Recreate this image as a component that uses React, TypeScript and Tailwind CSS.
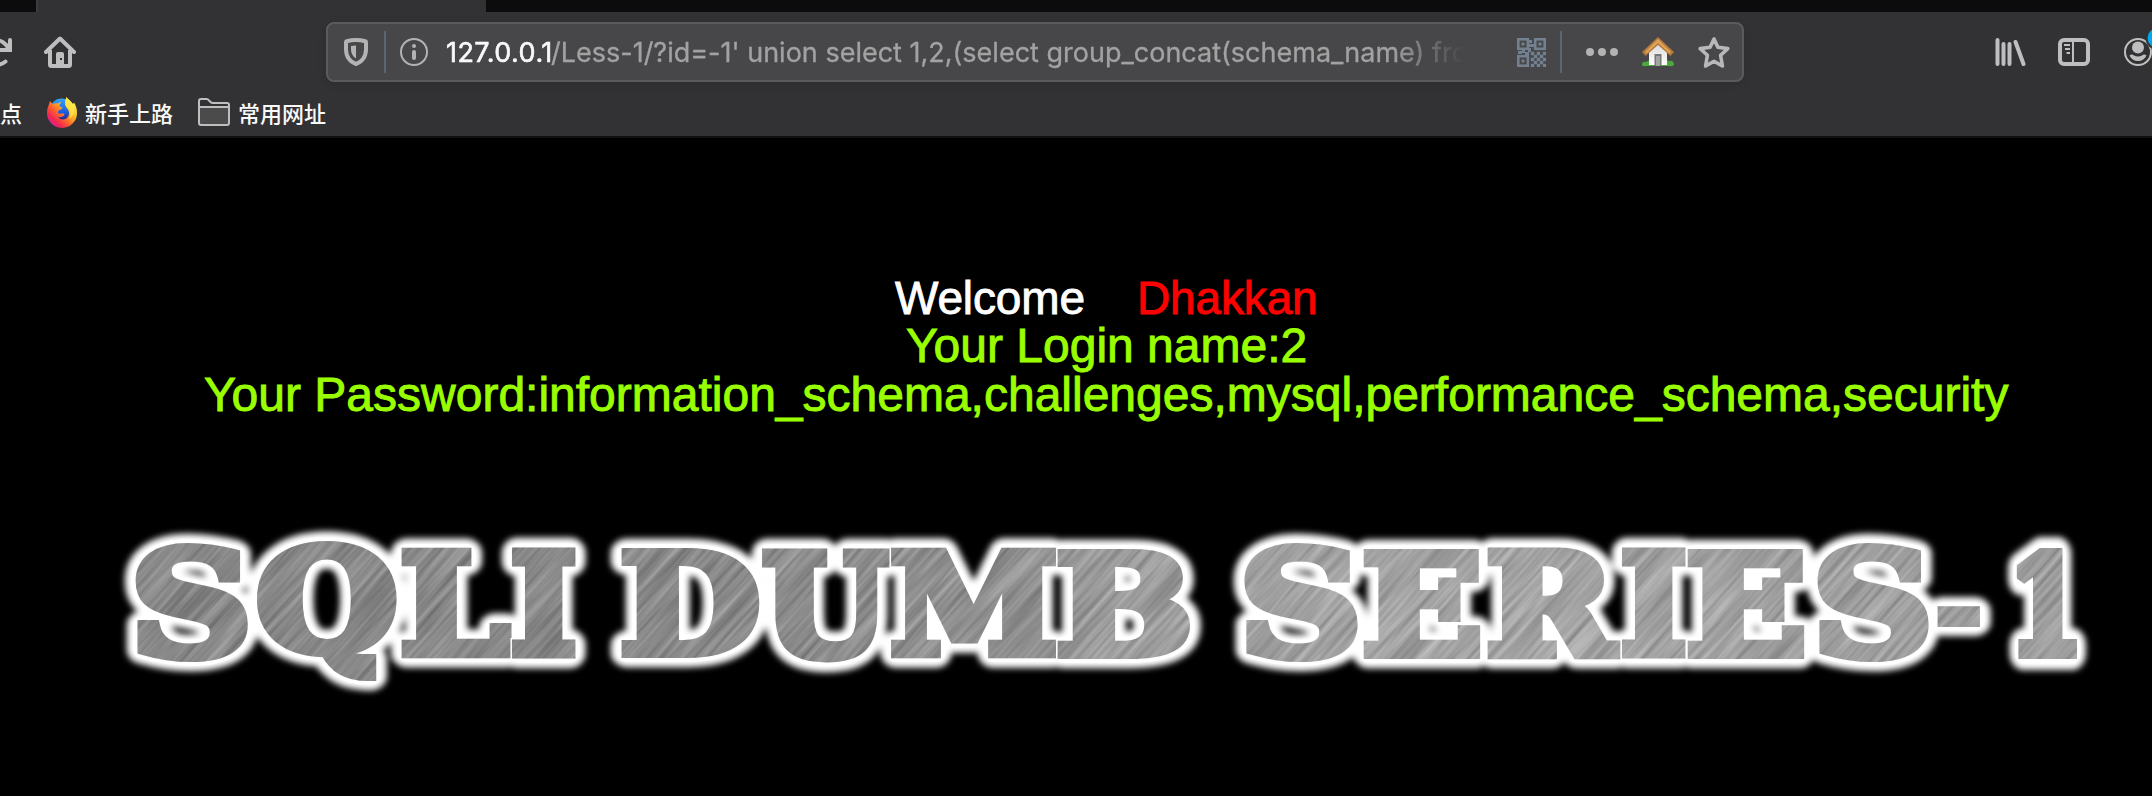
import { useMemo } from "react";

type Glyph = { ch: string; x0: number; x1: number; y0: number; y1: number };

/* Ink box of every banner letter, in banner coordinates. */
const GLYPHS: Glyph[] = [
  { ch: "S", x0: 135, x1: 248, y0: 42, y1: 162 },
  { ch: "Q", x0: 257, x1: 397, y0: 41, y1: 182 },
  { ch: "L", x0: 402, x1: 512, y0: 48, y1: 158 },
  { ch: "I", x0: 512, x1: 576, y0: 48, y1: 158 },
  { ch: "D", x0: 622, x1: 759, y0: 48, y1: 158 },
  { ch: "U", x0: 762, x1: 891, y0: 48, y1: 162 },
  { ch: "M", x0: 891, x1: 1057, y0: 48, y1: 158 },
  { ch: "B", x0: 1058, x1: 1190, y0: 48, y1: 159 },
  { ch: "S", x0: 1244, x1: 1358, y0: 42, y1: 162 },
  { ch: "E", x0: 1364, x1: 1480, y0: 48, y1: 159 },
  { ch: "R", x0: 1488, x1: 1621, y0: 48, y1: 159 },
  { ch: "I", x0: 1622, x1: 1686, y0: 48, y1: 158 },
  { ch: "E", x0: 1688, x1: 1804, y0: 48, y1: 159 },
  { ch: "S", x0: 1817, x1: 1929, y0: 42, y1: 162 },
  { ch: "-", x0: 1938, x1: 1980, y0: 106, y1: 128 },
  { ch: "1", x0: 2016, x1: 2078, y0: 48, y1: 158 },
];

const BOLDEN = 11;

function useFittedGlyphs() {
  return useMemo(() => {
    const ctx = document.createElement("canvas").getContext("2d")!;
    ctx.font = 'bold 150px "DejaVu Serif"';
    return GLYPHS.map((g) => {
      const m = ctx.measureText(g.ch);
      const left = -m.actualBoundingBoxLeft;
      const right = m.actualBoundingBoxRight;
      const top = -m.actualBoundingBoxAscent;
      const bottom = m.actualBoundingBoxDescent;
      const pad = BOLDEN / 2;
      const sx = (g.x1 - g.x0 - BOLDEN) / (right - left);
      const sy = (g.y1 - g.y0 - BOLDEN) / (bottom - top);
      const tx = g.x0 + pad - left * sx;
      const ty = g.y0 + pad - top * sy;
      return { ch: g.ch, transform: `matrix(${sx} 0 0 ${sy} ${tx} ${ty})` };
    });
  }, []);
}

function Banner() {
  const glyphs = useFittedGlyphs();
  const letter = (
    g: { ch: string; transform: string },
    key: string,
    color: string,
    stroke: number,
    join: "round" | "miter" = "round",
  ) => (
    <text
      key={key}
      transform={g.transform}
      fontFamily="DejaVu Serif, serif"
      fontWeight="bold"
      fontSize="150"
      fill={color}
      stroke={color}
      strokeWidth={stroke}
      strokeLinejoin={join}
      strokeMiterlimit="1.6"
      vectorEffect="non-scaling-stroke"
    >
      {g.ch}
    </text>
  );
  return (
    <svg width="2152" height="230" viewBox="0 0 2152 230" className="block shrink-0" aria-label="SQLI DUMB SERIES-1">
      <defs>
        <filter id="glow" x="0" y="0" width="2152" height="230" filterUnits="userSpaceOnUse">
          <feGaussianBlur stdDeviation="3" />
        </filter>
        <filter
          id="brush"
          x="-400"
          y="-1400"
          width="3200"
          height="3400"
          filterUnits="userSpaceOnUse"
          colorInterpolationFilters="sRGB"
        >
          <feTurbulence type="fractalNoise" baseFrequency="0.009 0.2" numOctaves="3" seed="4" />
          <feColorMatrix values="1 0 0 0 0.03  1 0 0 0 0.03  1 0 0 0 0.03  0 0 0 0 1" />
        </filter>
        <linearGradient id="steel" x1="0" y1="0" x2="2152" y2="0" gradientUnits="userSpaceOnUse">
          <stop offset="0" stopColor="#888888" />
          <stop offset="0.33" stopColor="#8a8a8a" />
          <stop offset="0.46" stopColor="#949494" />
          <stop offset="0.53" stopColor="#a8a8a8" />
          <stop offset="0.7" stopColor="#b0b0b0" />
          <stop offset="1" stopColor="#a2a2a2" />
        </linearGradient>
        <mask id="letters" x="0" y="0" width="2152" height="230" maskUnits="userSpaceOnUse">
          {glyphs.map((g, i) => (
            <g key={i}>
              {letter(g, "rim", "#000", BOLDEN + 3, "miter")}
              {letter(g, "face", "#fff", BOLDEN, "miter")}
            </g>
          ))}
        </mask>
      </defs>
      <g filter="url(#glow)">{glyphs.map((g, i) => letter(g, `${i}`, "#fff", BOLDEN + 20))}</g>
      <g>{glyphs.map((g, i) => letter(g, `${i}`, "#fff", BOLDEN + 8))}</g>
      <g mask="url(#letters)">
        <rect width="2152" height="230" fill="url(#steel)" />
        <g opacity="0.3">
          <g transform="rotate(-48)">
            <rect x="-400" y="-100" width="2300" height="2000" filter="url(#brush)" />
          </g>
        </g>
      </g>
    </svg>
  );
}

function Reload() {
  return (
    <svg width="12" height="32" viewBox="20 0 12 32" fill="none" stroke="#bebebf" strokeWidth="4" strokeLinecap="round">
      <path d="M14 4.500C20 3 26 7 29 13" />
      <path d="M30 4V14H20" strokeLinejoin="miter" />
      <path d="M25.500 25.500C22.500 28 19 29 16 29" />
    </svg>
  );
}

function Home() {
  return (
    <svg width="32" height="32" viewBox="0 0 32 32" fill="none">
      <path d="M2 16L16 2.500L30 16" stroke="#bebebf" strokeWidth="4" strokeLinecap="round" strokeLinejoin="round" />
      <path d="M6 14V28.500Q6 30 7.500 30H24.500Q26 30 26 28.500V14" stroke="#bebebf" strokeWidth="4" />
      <path d="M12 31V18Q12 16 14 16H18Q20 16 20 18V31Z" fill="#bebebf" />
      <rect x="16" y="22" width="2" height="2" fill="#323234" />
    </svg>
  );
}

function Shield() {
  return (
    <svg width="24" height="28" viewBox="0 0 24 28" fill="none">
      <path d="M12 2C15.500 2 19 2.600 21.300 3.200Q22 3.400 22 4.200V11.500C22 18.500 18 24.300 12 26C6 24.300 2 18.500 2 11.500V4.200Q2 3.400 2.700 3.200C5 2.600 8.500 2 12 2Z" stroke="#b3b3b4" strokeWidth="4" />
      <path d="M12 7.500V20.500C8.500 18.500 7 15 7 11.500V8Q9.500 7.500 12 7.500Z" fill="#b3b3b4" />
    </svg>
  );
}

function Info() {
  return (
    <svg width="28" height="28" viewBox="0 0 28 28" fill="none">
      <circle cx="14" cy="14" r="13" stroke="#b3b3b4" strokeWidth="2" />
      <circle cx="14" cy="8" r="2" fill="#b3b3b4" />
      <rect x="12" y="12" width="4" height="10" rx="2" fill="#b3b3b4" />
    </svg>
  );
}

function QrCode() {
  const cells: [number, number][] = [];
  for (let r = 0; r < 5; r++) for (let c = 0; c < 5; c++) if ((r + c) % 2 === 0) cells.push([14 + c * 3, 14 + r * 3]);
  return (
    <svg width="29" height="29" viewBox="0 0 29 29" fill="none" stroke="#73808f" strokeWidth="2.600">
      <rect x="1.300" y="1.300" width="9.500" height="9.500" />
      <rect x="18.200" y="1.300" width="9.500" height="9.500" />
      <rect x="1.300" y="18.200" width="9.500" height="9.500" />
      <g fill="#73808f" stroke="none">
        <rect x="4.500" y="4.500" width="3" height="3" />
        <rect x="21.500" y="4.500" width="3" height="3" />
        <rect x="4.500" y="21.500" width="3" height="3" />
        <rect x="12" y="2" width="3" height="3" />
        <rect x="12" y="6" width="5" height="3" />
        <rect x="11" y="10" width="3" height="4" />
        <rect x="1" y="13" width="4" height="3" />
        <rect x="5" y="12" width="3" height="3" />
        <rect x="8" y="14" width="4" height="3" />
        {cells.map(([x, y], i) => (
          <rect key={i} x={x - 0.2} y={y - 0.2} width="3.400" height="3.400" />
        ))}
      </g>
    </svg>
  );
}

function HouseBadge() {
  return (
    <svg width="32" height="30" viewBox="0 0 32 30" fill="none">
      <defs>
        <linearGradient id="wall" x1="0" y1="0" x2="0" y2="1">
          <stop offset="0" stopColor="#d8d8da" />
          <stop offset="1" stopColor="#ffffff" />
        </linearGradient>
      </defs>
      <path d="M0 28Q0 24 4 25Q8 22 10 26H22Q24 22 27 24Q32 23 32 28Q30 30 27 29H4Q1 30 0 28Z" fill="#4aa83c" />
      <path d="M7 15L16 6L25 15V28H7Z" fill="url(#wall)" />
      <rect x="12.500" y="17" width="7" height="12" fill="#777" />
      <rect x="14" y="19" width="4" height="10" fill="#a3a3a3" />
      <path d="M16 0L0 15L3.500 19L16 8L28.500 19L32 15Z" fill="#b57a38" />
      <path d="M16 2L3 15L4.500 16.500L16 6L27.500 16.500L29 15Z" fill="#dca25a" />
    </svg>
  );
}

function Star() {
  return (
    <svg width="32" height="33" viewBox="0 0 32 33" fill="none" stroke="#b8b8b9" strokeWidth="3.600" strokeLinejoin="round">
      <path d="M16 3L19.900 11.300L29.800 12.600L22.600 19.300L24.400 30L16 25.200L7.600 30L9.400 19.300L2.200 12.600L12.100 11.300Z" />
    </svg>
  );
}

function Library() {
  return (
    <svg width="32" height="28" viewBox="0 0 32 28" stroke="#bebebf" strokeWidth="4" strokeLinecap="round">
      <path d="M2.500 2V26M8.500 6V26M14.500 6V26M20.500 4L28.500 26" />
    </svg>
  );
}

function SidebarIcon() {
  return (
    <svg width="32" height="28" viewBox="0 0 32 28" fill="none" stroke="#bebebf">
      <rect x="2" y="2" width="28" height="24" rx="4" strokeWidth="4" />
      <path d="M15 3V25" strokeWidth="2" />
      <path d="M6 7H12M7 11H12M8.500 15H12" strokeWidth="2" />
    </svg>
  );
}

function Account() {
  return (
    <svg width="28" height="44" viewBox="0 0 28 44" fill="none">
      <circle cx="14" cy="22" r="13" stroke="#bebebf" strokeWidth="2" />
      <circle cx="14" cy="17.500" r="6" fill="#bebebf" />
      <path d="M5.500 25.500Q8 23.500 10 25.500Q14 27.500 18 25.500Q20 23.500 22.500 25.500C21 29 18 31 14 31C10 31 7 29 5.500 25.500Z" fill="#bebebf" />
      <circle cx="33" cy="8" r="11.500" fill="#323234" />
      <circle cx="33" cy="8" r="9.500" fill="#00a9ee" />
    </svg>
  );
}

function Firefox() {
  return (
    <svg width="30" height="31" viewBox="0 0 30 31">
      <defs>
        <linearGradient id="fox" x1="0.850" y1="0.100" x2="0.150" y2="0.850">
          <stop offset="0" stopColor="#fff04a" />
          <stop offset="0.350" stopColor="#ffb928" />
          <stop offset="0.600" stopColor="#ff6a2b" />
          <stop offset="0.850" stopColor="#f5274f" />
          <stop offset="1" stopColor="#d9228f" />
        </linearGradient>
        <linearGradient id="globe" x1="0.500" y1="0" x2="0.500" y2="1">
          <stop offset="0" stopColor="#35a5f5" />
          <stop offset="0.600" stopColor="#1b5be0" />
          <stop offset="1" stopColor="#2b1a78" />
        </linearGradient>
      </defs>
      <circle cx="14.500" cy="13" r="11.500" fill="url(#globe)" />
      <path d="M19.500 0C21 2.500 24 4 26 7L27 5.500C29 8.500 30 12 30 16A15 15 0 0 1 0 16C0 10.500 2 8.500 3 4L5.500 7C7.500 6 9 6.300 11 6.500C12 5.500 13.500 5 14.300 5.300C12.800 6.500 12.200 8 12.500 9.500L15.500 10.200C15.500 12 13 12.800 11.500 13.500L11 16C13 17.500 15 15.800 17.500 17C17 20 13 20.500 11 20C15 25 22.500 22 22 15.500C21.500 11.500 18.500 11 18.200 7C18 4 19 2 19.500 0Z" fill="url(#fox)" />
      <path d="M19.500 0C21 2.500 24.500 4 26.500 8.500C29 15 26 20 22 22C26 15 21 12 18.200 8C17.800 4.500 18.800 2 19.500 0Z" fill="#ffe94a" opacity="0.750" />
    </svg>
  );
}

function Folder() {
  return (
    <svg width="32" height="28" viewBox="0 0 32 28" fill="none" stroke="#bebebf" strokeWidth="2">
      <path d="M1 9V25Q1 27 3 27H29Q31 27 31 25V9Z" fill="#4b4b4c" />
      <path d="M1 9V3Q1 1 3 1H8.500Q10 1 11 2.500L12.500 4Q13.500 5 15 5H29Q31 5 31 7V9" />
    </svg>
  );
}

export default function App() {
  return (
    <div className="flex h-[796px] w-[2152px] flex-col overflow-hidden bg-black font-['Liberation_Sans',sans-serif]">
      <header className="flex h-[138px] shrink-0 flex-col border-b-2 border-[#101011] bg-[#323234]">
        <div className="flex h-3 shrink-0 bg-[#0c0c0d]">
          <div className="ml-9 w-[450px] border-l-2 border-[#3c3c3e] bg-[#323234]" />
        </div>
        <div className="flex h-20 shrink-0 items-center">
          <Reload />
          <div className="ml-8">
            <Home />
          </div>
          <div className="ml-[250px] flex h-[60px] w-[1418px] shrink-0 items-center rounded-lg border-2 border-[#5b5b5d] bg-[#474749] pl-4 shadow-[0_2px_8px_rgba(0,0,0,0.12)]">
            <Shield />
            <div className="ml-4 h-[42px] w-0.5 bg-[#5f6673]" />
            <div className="ml-3.5">
              <Info />
            </div>
            <div className="mt-0.5 ml-[18px] w-[1024px] overflow-hidden whitespace-pre font-['Inter',sans-serif] text-[27px] leading-[40px] text-[#a2a2a3] [mask-image:linear-gradient(to_right,#000_945px,transparent_1018px)] [-webkit-text-stroke:0.3px_#a2a2a3]">
              <span className="inline-block w-[105px] tracking-[0.45px] text-[#f9f9fa] [-webkit-text-stroke:0.6px_#f9f9fa]">127.0.0.1</span>
              <span>/Less-1/?id=-1' union select 1,2,(select group_concat(schema_name) from</span>
            </div>
            <div className="ml-[47px]">
              <QrCode />
            </div>
            <div className="ml-3.5 h-[42px] w-0.5 bg-[#5f6673]" />
            <div className="ml-6 flex gap-1">
              <i className="size-2 rounded-full bg-[#b3b3b4]" />
              <i className="size-2 rounded-full bg-[#b3b3b4]" />
              <i className="size-2 rounded-full bg-[#b3b3b4]" />
            </div>
            <div className="ml-6">
              <HouseBadge />
            </div>
            <div className="ml-6">
              <Star />
            </div>
          </div>
          <div className="ml-[251px] flex items-center">
            <Library />
            <div className="ml-[31px]">
              <SidebarIcon />
            </div>
            <div className="ml-[34px]">
              <Account />
            </div>
          </div>
        </div>
        <div className="flex h-11 shrink-0 items-center font-['Noto_Sans_CJK_SC',sans-serif] text-[22px] leading-8 font-medium text-[#f9f9fa]">
          <span className="mb-[5px] w-[22px]">点</span>
          <div className="mb-[3px] ml-[25px]">
            <Firefox />
          </div>
          <span className="mb-[5px] ml-2 w-[88px]">新手上路</span>
          <div className="mb-1 ml-[25px]">
            <Folder />
          </div>
          <span className="mb-[5px] ml-2">常用网址</span>
        </div>
      </header>
      <main className="flex flex-1 flex-col pt-[131px]">
        <div className="flex h-[49px] pl-[895px] text-[46px] leading-[58px] whitespace-nowrap">
          <span className="w-[242px] tracking-[-0.15px] text-white [-webkit-text-stroke:0.9px_#fff]">Welcome</span>
          <span className="tracking-[-0.15px] text-[#ff0000] [-webkit-text-stroke:0.9px_#f00]">Dhakkan</span>
        </div>
        <div className="flex h-[49px] pl-[906px] text-[48px] leading-[56px] whitespace-nowrap text-[#99ff00] [-webkit-text-stroke:0.9px_#9f0]">
          Your Login name:2
        </div>
        <div className="flex h-[49px] pl-[204px] text-[48px] leading-[56px] whitespace-nowrap text-[#99ff00] [-webkit-text-stroke:0.9px_#9f0]">
          Your Password:information_schema,challenges,mysql,performance_schema,security
        </div>
        <div className="mt-[84px]">
          <Banner />
        </div>
      </main>
    </div>
  );
}
